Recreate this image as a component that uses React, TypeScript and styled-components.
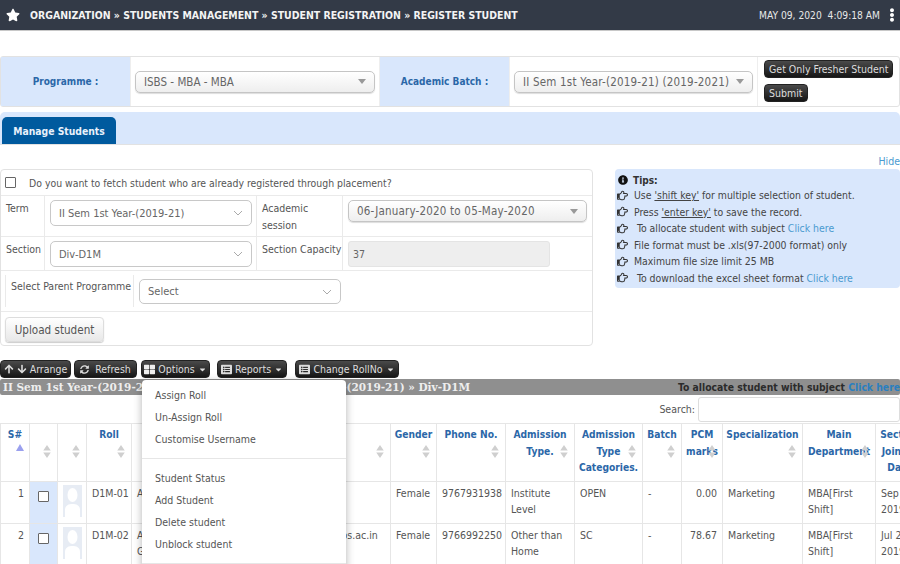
import React from "react";
import styled, { createGlobalStyle } from "styled-components";
import { FaStar, FaEllipsisV, FaArrowUp, FaArrowDown, FaSyncAlt, FaThLarge, FaListAlt, FaInfoCircle, FaRegHandPointRight, FaCaretDown } from "react-icons/fa";

const Global = createGlobalStyle`
  html, body { margin: 0; padding: 0; background: #fff; overflow: hidden; }
  body { width: 900px; height: 564px; font-family: "DejaVu Sans", Verdana, sans-serif; font-stretch: condensed; font-size: 10.5px; color: #555; }
  * { box-sizing: border-box; }
`;

const Header = styled.header`
  height: 31px; background: #333a47; border-bottom: 1px solid #c8c8c8;
  display: flex; align-items: center; padding: 0 1px 0 6px; color: #fff;
`;
const Crumbs = styled.div`
  margin-left: 10px; font-weight: 700; font-size: 10.45px; color: #f4f4f4; flex: 1; white-space: nowrap;
`;
const Clock = styled.div`
  font-size: 10.2px; color: #e8e8e8; margin-right: 5px; white-space: nowrap;
`;

const Panel = styled.section`
  margin-top: 25px; height: 51px; border: 1px solid #e2e2e2; border-radius: 3px;
  display: grid; grid-template-columns: 130px 249px 130px 248px 1fr; background: #fff;
`;
const PanelLabel = styled.div`
  background: #d9e7fc; color: #2b67a8; font-weight: 700; display: flex; align-items: center; justify-content: center; font-size: 10px;
  border-right: 1px solid #eee;
`;
const PanelCell = styled.div`
  display: flex; align-items: center; padding: 0 4px; border-right: 1px solid #eee;
`;
const ButtonStack = styled.div`
  display: flex; flex-direction: column; align-items: flex-start; gap: 6px; padding: 3px 6px;
`;
const DarkButton = styled.button<{ $w?: number }>`
  height: 18px; width: ${(p) => (p.$w ? `${p.$w}px` : "auto")}; flex: none; border: 1px solid #222; border-radius: 4px; color: #ddd;
  background: linear-gradient(#4a4a4a, #161616); font: inherit; font-size: 10.5px; padding: 0 4px; display: inline-flex; align-items: center; justify-content: center; gap: 3px; white-space: nowrap;
  font-stretch: condensed;
  svg { flex: none; }
`;
const SoftSelect = styled.div<{ $track?: number }>`
  width: 100%; height: 22px; border: 1px solid #c5c5c5; border-radius: 5px; padding: 0 8px; color: #666;
  letter-spacing: ${(p) => p.$track ?? 0}px;
  background: linear-gradient(#fff, #eee); display: flex; align-items: center; justify-content: space-between; font-size: 11.5px; white-space: nowrap;
  box-shadow: 0 1px 1px #ddd;
  &::after { content: ""; border: 4px solid transparent; border-top: 5px solid #999; margin-top: 4px; }
`;

const Tabs = styled.nav`
  margin-top: 5px; height: 33px; background: #d9e7fc; border-radius: 5px 5px 0 0; border-bottom: 1px solid #e2e2e2; padding: 5px 0 0 2px;
`;
const Tab = styled.div`
  width: 114px; height: 27px; background: #005a9e; color: #e9f1fb; font-weight: 700; border-radius: 5px 5px 0 0;
  display: flex; align-items: center; justify-content: center; font-size: 10.3px;
`;

const HideLink = styled.div`
  text-align: right; color: #4a9ad0; height: 24px; padding-top: 10px; font-size: 10.5px; line-height: 12px;
`;
const Columns = styled.div`
  display: flex; align-items: flex-start; justify-content: space-between; height: 191px;
`;
const Form = styled.div`
  width: 593px; height: 177px; border: 1px solid #e2e2e2; border-radius: 4px; font-size: 10.5px; color: #555;
  display: grid; grid-template-rows: 26px 41px 34px 41px 1fr;
`;
const Row = styled.div`
  display: flex; align-items: stretch; border-bottom: 1px solid #eaeaea; &:last-child { border-bottom: 0; }
`;
const Fetch = styled(Row)`
  align-items: center; padding-left: 4px; gap: 13px; font-size: 10.4px;
`;
const Grid4 = styled(Row)`
  display: grid; grid-template-columns: 44px 212px 86px 1fr;
`;
const Cell = styled.div`
  padding: 4px 5px; border-right: 1px solid #eaeaea; line-height: 17px; white-space: nowrap; &:last-child { border-right: 0; }
`;
const Parent = styled(Row)`
  padding: 4px 0 4px 4px;
`;
const ParentLabel = styled.div`
  width: 129px; padding: 5px 5px; border: solid #eaeaea; border-width: 0 1px; white-space: nowrap;
`;
const ParentField = styled.div`
  width: 213px; padding-left: 5px; padding-top: 4px;
`;
const Chooser = styled.div<{ $h?: number }>`
  height: ${(p) => p.$h ?? 26}px; width: 202px; border: 1px solid #c8c8c8; border-radius: 5px; padding: 0 8px; color: #666; font-size: 11px; display: flex; align-items: center; justify-content: space-between; background: #fff;
`;
const Chevron = styled.svg`
  width: 10px; height: 6px; fill: none; stroke: #aaa; stroke-width: 1;
`;
const Capacity = styled.div`
  height: 26px; width: 202px; background: #eee; border: 1px solid #e4e4e4; border-radius: 3px; padding: 0 4px; display: flex; align-items: center; color: #666;
`;
const UploadRow = styled(Row)`
  padding: 5px 4px; align-items: flex-start;
`;
const Upload = styled.button`
  width: 99px; height: 25px; border: 1px solid #ddd; border-radius: 4px; background: linear-gradient(#fff, #e8e8e8); color: #555; font: inherit; font-stretch: condensed; font-size: 11.6px;
  box-shadow: 0 1px 1px #ccc;
`;
const Tips = styled.aside`
  width: 285px; height: 119px; background: #d9e7fc; border-radius: 4px; padding: 4px 2px; font-size: 10.4px; color: #444;
`;
const TipTitle = styled.div`
  font-weight: 700; display: flex; align-items: center; gap: 5px; height: 14px; color: #333; font-size: 10px; padding-left: 1px;
`;
const Tip = styled.div`
  display: flex; align-items: center; gap: 6px; height: 16.5px; white-space: nowrap;
`;
const Under = styled.span`
  text-decoration: underline;
`;
const Link = styled.span`
  color: #4a9ad0;
`;

const Toolbar = styled.div`
  position: relative; display: flex; height: 19px;
`;
const Spacer = styled.div<{ $w: number }>`
  width: ${(p) => p.$w}px; flex: none;
`;
const Menu = styled.div`
  position: absolute; z-index: 5; left: 142px; top: 20px; width: 204px; height: 200px; background: #fff; border-radius: 4px; box-shadow: 0 2px 8px rgba(0,0,0,.3); padding: 4px 0; color: #555; font-size: 10.5px;
`;
const MenuItem = styled.div`
  height: 22px; padding-left: 13px; display: flex; align-items: center;
`;
const MenuLine = styled.div`
  height: 1px; background: #e6e6e6; margin: 8px 0 8px;
`;
const GreyBar = styled.div`
  height: 16px; background: #8f8f8f; border-radius: 2px; display: flex; justify-content: space-between; align-items: center; padding: 0 0 0 3px;
  overflow: hidden; white-space: nowrap;
`;
const GreyTitle = styled.div`
  font-family: "DejaVu Serif", serif; font-stretch: normal; font-weight: 700; font-size: 10.5px; color: #eee;
`;
const GreyNote = styled.div`
  font-weight: 700; font-size: 10.3px; color: #2b2b2b;
  span { color: #2a7fc0; }
`;
const SearchRow = styled.div`
  display: flex; justify-content: flex-end; align-items: center; gap: 3px; height: 28px; padding-bottom: 0; font-size: 10.5px;
`;
const SearchBox = styled.div`
  width: 202px; height: 25px; border: 1px solid #ddd; border-radius: 3px;
`;

const Table = styled.table`
  table-layout: fixed; width: 923px; border-collapse: collapse; font-size: 10.5px;
  th, td { border: 1px solid #e6e6e6; vertical-align: top; }
`;
const Th = styled.th`
  position: relative; height: 58px; color: #2b67a8; font-weight: 700; font-size: 10.2px; line-height: 16.5px; text-align: center; padding: 3px 2px;
`;
const Sort = styled.svg`
  position: absolute; right: 6px; top: 20px; width: 8px; height: 15px; fill: #cfcfcf;
`;
const Asc = styled.svg`
  display: block; margin: 0 0 0 13px; width: 8px; height: 7px; fill: #9aa0ee;
`;
const Td = styled.td<{ $right?: boolean; $blue?: boolean; $nowrap?: boolean }>`
  height: 42px; padding: 3px 5px; line-height: 16px; text-align: ${(p) => (p.$right ? "right" : "left")}; background: ${(p) => (p.$blue ? "#d9e7fc" : "#fff")};
  white-space: ${(p) => (p.$nowrap ? "nowrap" : "pre-line")};
`;
const Box = styled.span`
  display: block; width: 11px; height: 11px; border: 1px solid #666; background: #fff; margin: 6px 0 0 3px; border-radius: 1px;
`;
const FormBox = styled(Box)`
  margin: 0; flex: none;
`;
const Avatar = styled.svg`
  display: block; width: 19px; height: 32px; margin: 0 auto;
`;

const Down = () => <Chevron viewBox="0 0 10 6"><path d="M1 1l4 4 4-4" /></Chevron>;
const Arrows = () => <Sort viewBox="0 0 7 14"><path d="M3.5 1L7 6H0zM3.5 13L0 8h7z" /></Sort>;
const Face = () => (
  <Avatar viewBox="0 0 19 32">
    <rect width="19" height="32" fill="#e7ecf4" />
    <ellipse cx="9.5" cy="10" rx="5" ry="7" fill="#fff" />
    <path d="M2 32v-7c0-5 4-6 7.5-6s7.5 1 7.5 6v7z" fill="#fff" />
  </Avatar>
);
const Hand = () => <FaRegHandPointRight size={11} color="#333" />;

const cols = [29, 28, 29, 45, 109, 150, 46, 69, 69, 68, 39, 41, 80, 73, 48];
const heads = ["S#", "", "", "Roll", "", "", "Gender", "Phone No.", "Admission Type.", "Admission Type Categories.", "Batch", "PCM marks", "Specialization", "Main Department", "Section Joining Date"];
const rows = [
  ["1", "D1M-01", "A", "", "Female", "9767931938", "Institute Level", "OPEN", "-", "0.00", "Marketing", "MBA[First Shift]", "Sep 12, 2019"],
  ["2", "D1M-02", "A\nG", "student.d1m002@isbs.ac.in", "Female", "9766992250", "Other than Home", "SC", "-", "78.67", "Marketing", "MBA[First Shift]", "Jul 25, 2019"],
];

export default function App() {
  return (
    <>
      <Global />
      <Header>
        <FaStar size={14} />
        <Crumbs>ORGANIZATION » STUDENTS MANAGEMENT » STUDENT REGISTRATION » REGISTER STUDENT</Crumbs>
        <Clock>MAY 09, 2020 &nbsp;4:09:18 AM</Clock>
        <FaEllipsisV size={14} />
      </Header>

      <Panel>
        <PanelLabel>Programme :</PanelLabel>
        <PanelCell><SoftSelect>ISBS - MBA - MBA</SoftSelect></PanelCell>
        <PanelLabel>Academic Batch :</PanelLabel>
        <PanelCell><SoftSelect $track={0.2}>II Sem 1st Year-(2019-21) (2019-2021)</SoftSelect></PanelCell>
        <ButtonStack>
          <DarkButton>Get Only Fresher Student</DarkButton>
          <DarkButton>Submit</DarkButton>
        </ButtonStack>
      </Panel>

      <Tabs><Tab>Manage Students</Tab></Tabs>
      <HideLink>Hide</HideLink>

      <Columns>
        <Form>
          <Fetch><FormBox />Do you want to fetch student who are already registered through placement?</Fetch>
          <Grid4>
            <Cell>Term</Cell>
            <Cell><Chooser>II Sem 1st Year-(2019-21)<Down /></Chooser></Cell>
            <Cell>Academic<br />session</Cell>
            <Cell><SoftSelect $track={0.2}>06-January-2020 to 05-May-2020</SoftSelect></Cell>
          </Grid4>
          <Grid4>
            <Cell>Section</Cell>
            <Cell><Chooser>Div-D1M<Down /></Chooser></Cell>
            <Cell>Section Capacity</Cell>
            <Cell><Capacity>37</Capacity></Cell>
          </Grid4>
          <Parent>
            <ParentLabel>Select Parent Programme</ParentLabel>
            <ParentField><Chooser $h={25}>Select<Down /></Chooser></ParentField>
          </Parent>
          <UploadRow><Upload>Upload student</Upload></UploadRow>
        </Form>
        <Tips>
          <TipTitle><FaInfoCircle size={10} color="#111" />Tips:</TipTitle>
          <Tip><Hand /><span>Use <Under>'shift key'</Under> for multiple selection of student.</span></Tip>
          <Tip><Hand /><span>Press <Under>'enter key'</Under> to save the record.</span></Tip>
          <Tip><Hand /><span>&nbsp;To allocate student with subject <Link>Click here</Link></span></Tip>
          <Tip><Hand /><span>File format must be .xls(97-2000 format) only</span></Tip>
          <Tip><Hand /><span>Maximum file size limit 25 MB</span></Tip>
          <Tip><Hand /><span>&nbsp;To download the excel sheet format <Link>Click here</Link></span></Tip>
        </Tips>
      </Columns>

      <Toolbar>
        <DarkButton $w={71}><FaArrowUp size={10} /><FaArrowDown size={10} />Arrange</DarkButton>
        <Spacer $w={3} />
        <DarkButton $w={63}><FaSyncAlt size={9} /> &nbsp;Refresh</DarkButton>
        <Spacer $w={4} />
        <DarkButton $w={69}><FaThLarge size={11} color="#eee" />Options<FaCaretDown size={9} /></DarkButton>
        <Spacer $w={7} />
        <DarkButton $w={70}><FaListAlt size={11} />Reports<FaCaretDown size={9} /></DarkButton>
        <Spacer $w={8} />
        <DarkButton $w={104}><FaListAlt size={11} />Change RollNo<FaCaretDown size={9} /></DarkButton>
        <Menu>
          <MenuItem>Assign Roll</MenuItem>
          <MenuItem>Un-Assign Roll</MenuItem>
          <MenuItem>Customise Username</MenuItem>
          <MenuLine />
          <MenuItem>Student Status</MenuItem>
          <MenuItem>Add Student</MenuItem>
          <MenuItem>Delete student</MenuItem>
          <MenuItem>Unblock student</MenuItem>
          <MenuLine />
        </Menu>
      </Toolbar>

      <GreyBar>
        <GreyTitle>II Sem 1st Year-(2019-21) » ISBS - MBA » II Sem 1st Year-(2019-21) » Div-D1M</GreyTitle>
        <GreyNote>To allocate student with subject <span>Click here</span></GreyNote>
      </GreyBar>
      <SearchRow>Search: <SearchBox /></SearchRow>

      <Table>
        <colgroup>{cols.map((w, i) => <col key={i} style={{ width: w }} />)}</colgroup>
        <thead>
          <tr>
            {heads.map((h, i) => (
              <Th key={i}>{h}{i === 0 ? <Asc viewBox="0 0 7 6"><path d="M3.5 0L7 6H0z" /></Asc> : <Arrows />}</Th>
            ))}
          </tr>
        </thead>
        <tbody>
          {rows.map((r) => (
            <tr key={r[0]}>
              <Td $right>{r[0]}</Td>
              <Td $blue><Box /></Td>
              <Td><Face /></Td>
              <Td $nowrap>{r[1]}</Td>
              <Td>{r[2]}</Td>
              <Td $nowrap>{r[3]}</Td>
              <Td>{r[4]}</Td>
              <Td>{r[5]}</Td>
              <Td>{r[6]}</Td>
              <Td>{r[7]}</Td>
              <Td>{r[8]}</Td>
              <Td $right>{r[9]}</Td>
              <Td>{r[10]}</Td>
              <Td>{r[11]}</Td>
              <Td>{r[12]}</Td>
            </tr>
          ))}
        </tbody>
      </Table>
    </>
  );
}
